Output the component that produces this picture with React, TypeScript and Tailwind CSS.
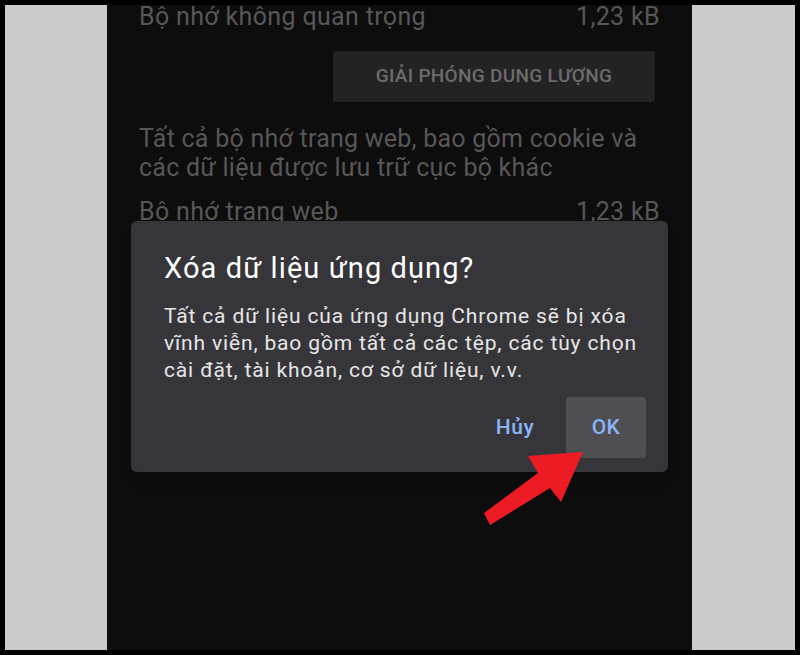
import React from 'react';

const font = { fontFamily: 'Roboto, "Noto Sans", sans-serif' };

const SizeRow = ({ label, size }: { label: string; size: string }) => (
  <div className="flex justify-between items-baseline text-[25px] leading-[29px] tracking-[0.35px] text-[#575757]">
    <span>{label}</span>
    <span>{size}</span>
  </div>
);

const Arrow = () => (
  <svg
    className="absolute left-0 top-0 pointer-events-none"
    width="800"
    height="655"
    viewBox="0 0 800 655"
  >
    <polygon
      points="583,452 528,456 538,473 484,513 490,525 550,488 561,502"
      fill="#ed1c24"
    />
  </svg>
);

const App = () => {
  return (
    <div
      className="relative w-[800px] h-[655px] bg-black p-[5px] overflow-hidden"
      style={font}
    >
      <div className="flex h-full bg-[#cbcbcb]">
        <div className="ml-[102px] w-[585px] h-full bg-[#0d0d0d] overflow-hidden">
          <div className="px-[32px] -mt-[3px]">
            <SizeRow label="Bộ nhớ không quan trọng" size="1,23 kB" />
            <div className="flex justify-end mt-[20px] mr-[5px]">
              <button className="w-[322px] h-[51px] rounded-[3px] bg-[#232323] text-[#6c6c6c] text-[19px] font-medium tracking-[0.3px] uppercase">
                Giải phóng dung lượng
              </button>
            </div>
            <p className="mt-[22px] text-[25px] leading-[29px] tracking-[0.25px] text-[#575757]">
              Tất cả bộ nhớ trang web, bao gồm cookie và các dữ liệu được lưu
              trữ cục bộ khác
            </p>
            <div className="mt-[15px]">
              <SizeRow label="Bộ nhớ trang web" size="1,23 kB" />
            </div>
          </div>
        </div>
      </div>

      {/* dialog */}
      <div className="absolute left-[131px] top-[221px] w-[537px] h-[251px] rounded-[6px] bg-[#36363a] shadow-lg pl-[33px] pr-[22px] pt-[30px]">
        <h2 className="text-[29px] leading-[34px] tracking-[1.1px] text-white">
          Xóa dữ liệu ứng dụng?
        </h2>
        <p className="mt-[18px] pr-[2px] text-[21px] leading-[27px] tracking-[0.85px] text-[#e6e6e6]">
          Tất cả dữ liệu của ứng dụng Chrome sẽ bị xóa vĩnh viễn, bao gồm tất
          cả các tệp, các tùy chọn cài đặt, tài khoản, cơ sở dữ liệu, v.v.
        </p>
        <div className="flex justify-end gap-[11px] mt-[13px]">
          <button className="w-[80px] h-[61px] rounded-[3px] text-[21px] font-medium tracking-[0.5px] text-[#8ab4f8]">
            Hủy
          </button>
          <button className="w-[80px] h-[61px] rounded-[3px] bg-[#4e4e53] text-[21px] font-medium tracking-[0.5px] text-[#8ab4f8]">
            OK
          </button>
        </div>
      </div>

      <Arrow />
    </div>
  );
};

export default App;
